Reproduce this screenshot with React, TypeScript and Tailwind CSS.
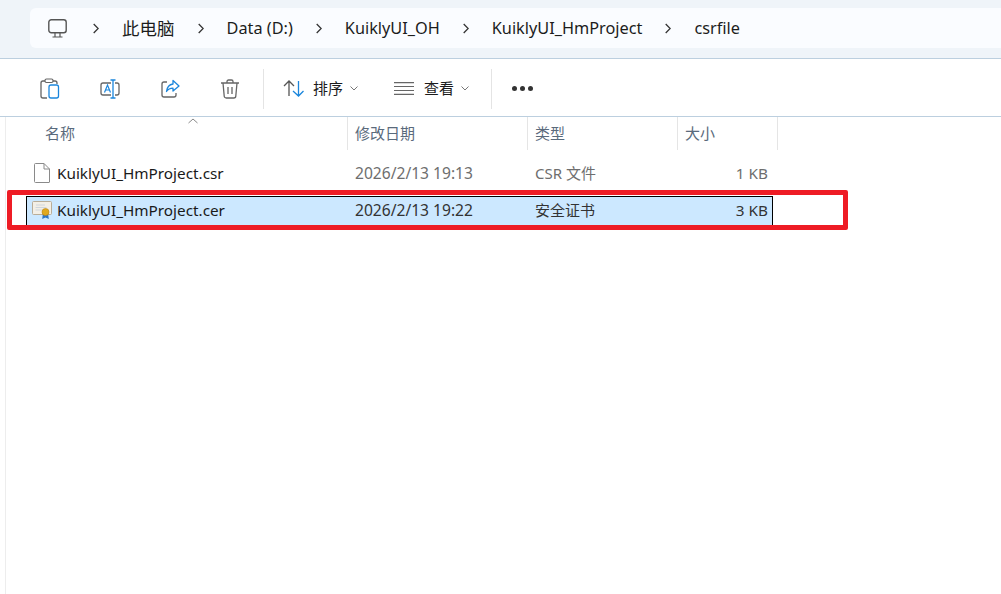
import React from "react";

const font = { fontFamily: '"Noto Sans", "Noto Sans CJK SC", sans-serif' };

function Chevron() {
  return (
    <svg width="6" height="11" viewBox="0 0 6 11" fill="none" stroke="#333" strokeWidth="1.300">
      <path d="M.7 1l4.500 4.500L.7 10" />
    </svg>
  );
}

function Down() {
  return (
    <svg width="8" height="5" viewBox="0 0 8 5" fill="none" stroke="#777" strokeWidth="1">
      <path d="M.5.5l3.500 3.500L7.500.5" />
    </svg>
  );
}

function PcIcon() {
  return (
    <svg width="19" height="19" viewBox="0 0 19 19" fill="none" stroke="#555" strokeWidth="1.400">
      <rect x=".8" y=".8" width="17.400" height="13" rx="2.500" />
      <path d="M4.500 18h10M7 14v4M12 14v4" strokeWidth="1.200" />
    </svg>
  );
}

function PasteIcon() {
  return (
    <svg width="20" height="21" viewBox="0 0 20 21" fill="none">
      <path d="M5 3H3a2 2 0 0 0-2 2v13a2 2 0 0 0 2 2h4M13 3h2a2 2 0 0 1 2 2v1" stroke="#666" strokeWidth="1.300" />
      <rect x="5" y="1" width="8" height="3.500" rx="1.500" stroke="#666" strokeWidth="1.200" />
      <rect x="9" y="7" width="9.500" height="13" rx="2" stroke="#1b86dc" strokeWidth="1.300" />
    </svg>
  );
}

function RenameIcon() {
  return (
    <svg width="20" height="20" viewBox="0 0 20 20" fill="none">
      <path d="M11 4H3a2 2 0 0 0-2 2v8a2 2 0 0 0 2 2h8M15 4h2a2 2 0 0 1 2 2v8a2 2 0 0 1-2 2h-2" stroke="#666" strokeWidth="1.300" />
      <path d="M10.500 1h5M13 1v18M10.500 19h5" stroke="#1b86dc" strokeWidth="1.300" />
      <path d="M4.500 13.500L7.500 6l3 7.500M5.500 11h4" stroke="#1b86dc" strokeWidth="1.200" />
    </svg>
  );
}

function ShareIcon() {
  return (
    <svg width="19" height="19" viewBox="0 0 19 19" fill="none">
      <path d="M6 3H3a2 2 0 0 0-2 2v11a2 2 0 0 0 2 2h10a2 2 0 0 0 2-2v-2" stroke="#666" strokeWidth="1.300" />
      <path d="M12 1.500l6 5.500-6 5V9.200c-3 0-5 1-6.500 3.300C6 8.500 8.500 5.500 12 5V1.500z" stroke="#1b86dc" strokeWidth="1.300" strokeLinejoin="round" />
    </svg>
  );
}

function TrashIcon() {
  return (
    <svg width="18" height="20" viewBox="0 0 18 20" fill="none" stroke="#666" strokeWidth="1.300">
      <path d="M0 4h18M6 4V2.500A1.500 1.500 0 0 1 7.500 1h3A1.500 1.500 0 0 1 12 2.500V4" />
      <path d="M2 4l1.200 13a2 2 0 0 0 2 2h7.600a2 2 0 0 0 2-2L16 4" />
      <path d="M7 8v7M11 8v7" />
    </svg>
  );
}

function SortIcon() {
  return (
    <svg width="21" height="17" viewBox="0 0 21 17" fill="none" strokeWidth="1.300">
      <path d="M1 6l5-5 5 5M6 1v15" stroke="#555" />
      <path d="M10 11l5.500 5 5-5M15.500 1v15" stroke="#1b86dc" />
    </svg>
  );
}

function ViewIcon() {
  return (
    <svg width="20" height="13" viewBox="0 0 20 13" fill="none" stroke="#666" strokeWidth="1.200">
      <path d="M0 .6h20M0 4.500h20M0 8.500h20M0 12.400h20" />
    </svg>
  );
}

function FileIcon() {
  return (
    <svg width="16" height="20" viewBox="0 0 16 20" fill="#fff" stroke="#8a8a8a" strokeWidth="1">
      <path d="M1.500.5h8.500l5.500 5.500v13a.5.5 0 0 1-.5.5H1.500a1 1 0 0 1-1-1V1.500a1 1 0 0 1 1-1z" />
      <path d="M10 .5V6h5.500" fill="none" />
    </svg>
  );
}

function CertIcon() {
  return (
    <svg width="20" height="19" viewBox="0 0 20 19">
      <rect x=".5" y=".5" width="19" height="13" rx="1" fill="#f3efe6" stroke="#b9ad98" />
      <path d="M4 4h9M3.500 6.500h11M3.500 9h7" stroke="#cfd6dd" strokeWidth="1" />
      <path d="M11 12l-.8 6 3.300-1.500 3.300 1.500-.8-6z" fill="#2c74c4" />
      <circle cx="13.500" cy="11" r="3.500" fill="#e0a91f" stroke="#b98212" strokeWidth=".6" />
    </svg>
  );
}

function ToolButton({ children }: { children: React.ReactNode }) {
  return <div className="flex h-6 w-[60px] items-center justify-center">{children}</div>;
}

const crumbs = [
  { label: "此电脑", cjk: true },
  { label: "Data (D:)", cjk: false },
  { label: "KuiklyUI_OH", cjk: false },
  { label: "KuiklyUI_HmProject", cjk: false },
  { label: "csrfile", cjk: false },
];

const files = [
  { name: "KuiklyUI_HmProject.csr", date: "2026/2/13 19:13", type: "CSR 文件", size: "1 KB", cert: false },
  { name: "KuiklyUI_HmProject.cer", date: "2026/2/13 19:22", type: "安全证书", size: "3 KB", cert: true },
];

export default function App() {
  return (
    <div className="relative flex h-[594px] w-[1001px] flex-col overflow-hidden bg-white" style={font}>
      {/* address bar */}
      <div className="h-[59px] shrink-0 border-b border-[#bccfdf] bg-[#eff4f9] pl-[30px] pt-2">
        <div className="flex h-10 items-center rounded-l-md bg-[#fafcff] pl-[18px] text-[16.300px] text-[#1c1c1c]">
          <PcIcon />
          <div className="ml-[26px] flex items-center">
            {crumbs.map((c) => (
              <React.Fragment key={c.label}>
                <Chevron />
                <span className={`mx-[23px] whitespace-nowrap ${c.cjk ? "text-[17.500px]" : ""}`}>{c.label}</span>
              </React.Fragment>
            ))}
          </div>
        </div>
      </div>

      {/* toolbar */}
      <div className="flex h-[58px] shrink-0 items-center border-b border-[#bccfdf] pl-[20px] pt-[2px]">
        <ToolButton><PasteIcon /></ToolButton>
        <ToolButton><RenameIcon /></ToolButton>
        <ToolButton><ShareIcon /></ToolButton>
        <ToolButton><TrashIcon /></ToolButton>
        <div className="ml-[3px] h-10 w-px bg-[#e4e4e4]" />
        <div className="ml-[19px] flex items-center text-[15px] text-[#1c1c1c]">
          <SortIcon />
          <span className="ml-[9px]">排序</span>
          <span className="ml-[7px]"><Down /></span>
          <span className="ml-[36px]"><ViewIcon /></span>
          <span className="ml-[10px]">查看</span>
          <span className="ml-[7px]"><Down /></span>
        </div>
        <div className="ml-[22px] h-10 w-px bg-[#e4e4e4]" />
        <div className="ml-[20px] flex gap-[3px]">
          <div className="size-[5px] rounded-full bg-[#333]" />
          <div className="size-[5px] rounded-full bg-[#333]" />
          <div className="size-[5px] rounded-full bg-[#333]" />
        </div>
      </div>

      {/* file list */}
      <div className="relative flex-1 pl-[5px]">
        <div className="h-full border-l border-[#ededed]">
          <div className="relative flex h-[33px] text-[15px] text-[#5a6a7c]">
            <div className="w-[341px] pl-[39px] pt-[5px]">名称</div>
            <div className="w-[180px] border-l border-[#e5e5e5] pl-[7px] pt-[5px]">修改日期</div>
            <div className="w-[150px] border-l border-[#e5e5e5] pl-[7px] pt-[5px]">类型</div>
            <div className="w-[101px] border-x border-[#e5e5e5] pl-[7px] pt-[5px]">大小</div>
            <svg className="absolute left-[182px] top-[1px]" width="10" height="6" viewBox="0 0 10 6" fill="none" stroke="#888">
              <path d="M.5 5L5 1l4.500 4" />
            </svg>
          </div>
          <div className="mt-[9px] flex flex-col gap-[7px] pl-[20px] text-[15.300px]">
            {files.map((f) => (
              <div
                key={f.name}
                className={`flex h-[30px] w-[747px] items-center pb-[2px] ${f.cert ? "border border-black bg-[#cce8ff]" : "border border-transparent"}`}
              >
                <div className="flex w-[328px] items-center">
                  <div className="flex w-[30px] justify-center">{f.cert ? <CertIcon /> : <FileIcon />}</div>
                  <span className="text-[#1a1a1a]">{f.name}</span>
                </div>
                <div className={`w-[180px] pt-[2px] text-[15.600px] ${f.cert ? "text-[#333]" : "text-[#6e6e6e]"}`}>{f.date}</div>
                <div className={`w-[142px] text-[15px] ${f.cert ? "text-[#333]" : "text-[#6e6e6e]"}`}>{f.type}</div>
                <div className={`w-[91px] text-right ${f.cert ? "text-[#333]" : "text-[#6e6e6e]"}`}>{f.size}</div>
              </div>
            ))}
          </div>
        </div>
      </div>

      {/* red annotation around the selected row */}
      <div className="absolute left-[7px] top-[190px] h-[40px] w-[841px] rounded-[2px] border-[5px] border-[#ee1c25]" />
    </div>
  );
}
